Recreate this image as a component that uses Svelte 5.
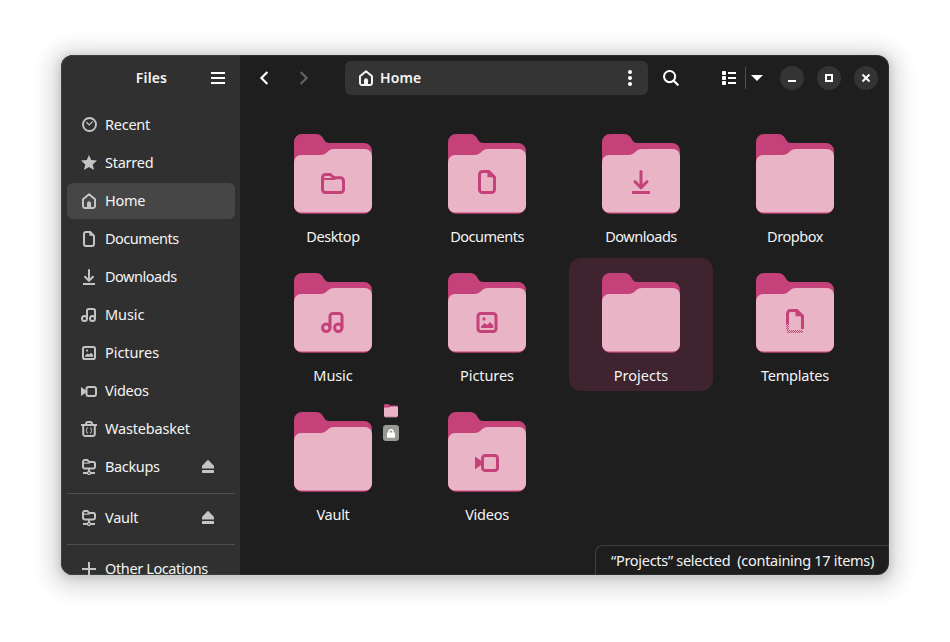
<script>
  const places = [
    { name: 'Recent', icon: 'recent' },
    { name: 'Starred', icon: 'star' },
    { name: 'Home', icon: 'home', active: true },
    { name: 'Documents', icon: 'document' },
    { name: 'Downloads', icon: 'download' },
    { name: 'Music', icon: 'music' },
    { name: 'Pictures', icon: 'picture' },
    { name: 'Videos', icon: 'video' },
    { name: 'Wastebasket', icon: 'trash' },
    { name: 'Backups', icon: 'remote', eject: true },
    { separator: true },
    { name: 'Vault', icon: 'remote', eject: true },
    { separator: true },
    { name: 'Other Locations', icon: 'plus' }
  ];

  const folders = [
    { name: 'Desktop', icon: 'folder' },
    { name: 'Documents', icon: 'document' },
    { name: 'Downloads', icon: 'download' },
    { name: 'Dropbox' },
    { name: 'Music', icon: 'music' },
    { name: 'Pictures', icon: 'picture' },
    { name: 'Projects', selected: true },
    { name: 'Templates', icon: 'template' },
    { name: 'Vault', emblems: true },
    { name: 'Videos', icon: 'video' }
  ];

  // Letter spacing in px for labels that differ from the default
  const tracking = {
    Documents: -0.5, Downloads: -0.48, Desktop: -0.42, Dropbox: -0.45,
    Music: -0.1, Pictures: -0.06, Projects: 0, Templates: -0.2, Wastebasket: -0.18,
    Backups: -0.36, 'Other Locations': -0.38
  };
</script>

{#snippet glyph(name)}
  <svg class="glyph {name}" viewBox="0 0 16 16" fill="none" stroke="currentColor" stroke-width="2">
    {#if name === 'recent'}
      <circle cx="8.5" cy="7.5" r="6.5" stroke-width="1.9" />
      <path d="M5.3 5.3 8.2 8 11.8 4.4" stroke-width="1.2" />
    {:else if name === 'star'}
      <path d="M8 0 10.2 5 16 5.5 11.7 9.4 13 15 8 12.1 3 15 4.3 9.4 0 5.5 5.8 5Z" fill="currentColor" stroke="none" />
    {:else if name === 'home'}
      <path d="M2 6.3 8 1.2 14 6.3V13a1.9 1.9 0 0 1-1.9 2H3.9A1.9 1.9 0 0 1 2 13Z" stroke-linejoin="round" />
      <path d="M6 15V10.2A2 2 0 0 1 8 8.2A2 2 0 0 1 10 10.2V15Z" fill="currentColor" stroke="none" />
    {:else if name === 'document'}
      <path d="M5 1H9.2L13 4.8V13a2 2 0 0 1-2 2H5a2 2 0 0 1-2-2V3a2 2 0 0 1 2-2Z" />
      <path d="M8.3 1V4.8H13.5L10 1Z" fill="currentColor" stroke="none" />
    {:else if name === 'template'}
      <path d="M3 10V3a2 2 0 0 1 2-2H9.2L13 4.8V13.4" />
      <path d="M8.3 1V4.8H13.5L10 1Z" fill="currentColor" stroke="none" />
      <g stroke-width=".67" stroke-dasharray=".67 .67">
        <path d="M2.33 10V14M3.67 10V14M2.67 14.33H13.33M2.67 15.67H13.33" />
        <path d="M3 10.67V14M3.33 15H13.33" />
      </g>
    {:else if name === 'download'}
      <path d="M8 1V11" stroke-linecap="round" />
      <path d="M4 7.8 8 11.8 12 7.8" stroke-linecap="round" stroke-linejoin="round" />
      <path d="M2 15H14" />
    {:else if name === 'music'}
      <circle cx="3.5" cy="12.5" r="2.5" />
      <circle cx="11.5" cy="12.5" r="2.5" />
      <path d="M6 12.5V4.8A1.8 1.8 0 0 1 7.8 3H12.2A1.8 1.8 0 0 1 14 4.8V12.5" />
    {:else if name === 'picture'}
      <rect x="2" y="3" width="12" height="12" rx="1.8" />
      <circle cx="6" cy="6.6" r="1.05" fill="currentColor" stroke="none" />
      <path d="M4 12.7V11.7L6.4 9.4 8.2 10.6 10 8.7 12.2 11V12.7Z" fill="currentColor" stroke="none" />
    {:else if name === 'video'}
      <rect x="5" y="5" width="10" height="10" rx="1.9" />
      <path d="M0 5.7 4.3 8.6V11.2L0 14.2Z" fill="currentColor" stroke="none" />
    {:else if name === 'video-small'}
      <rect x="5.5" y="4" width="9.5" height="9" rx="1.9" />
      <path d="M0 4 4.8 7.3V9.8L0 13Z" fill="currentColor" stroke="none" />
    {:else if name === 'trash'}
      <path d="M0 4H16" />
      <path d="M5 4V3A2 2 0 0 1 7 1H9A2 2 0 0 1 11 3V4" />
      <path d="M2.2 5V13A2 2 0 0 0 4.2 15H11.8A2 2 0 0 0 13.8 13V5" />
      <path d="M7 6.8Q5.6 6.8 5.6 8.2V10.8Q5.6 12.2 7 12.2M9 6.8Q10.4 6.8 10.4 8.2V10.8Q10.4 12.2 9 12.2" stroke-width="1" />
    {:else if name === 'remote'}
      <path d="M2 2.8A1.7 1.7 0 0 1 3.7 1.1H6.2L8.4 3H12.3A1.8 1.8 0 0 1 14 4.8V7.8A1.8 1.8 0 0 1 12.2 9.6H3.8A1.8 1.8 0 0 1 2 7.8Z" />
      <path d="M2 4.1H8.5" stroke-width="1.2" />
      <path d="M8 10V12.4M2 14H6M10 14H14" stroke-width="1.9" />
      <circle cx="8" cy="14" r="1.5" stroke-width="1.3" />
    {:else if name === 'folder'}
      <path d="M1 5A2 2 0 0 1 3 3H6.2L8.8 5.2H13A2 2 0 0 1 15 7.2V13A2 2 0 0 1 13 15H3A2 2 0 0 1 1 13Z" />
      <path d="M2 6H9.5" stroke-width="1.2" />
    {:else if name === 'plus'}
      <path d="M8 1V15M1 8H15" />
    {/if}
  </svg>
{/snippet}

{#snippet label(name)}
  <span style:letter-spacing={name in tracking ? `${tracking[name]}px` : null}>{name}</span>
{/snippet}

{#snippet folderArt()}
  <svg class="art" viewBox="0 0 78 80" preserveAspectRatio="none">
    <path d="M0 8A8 8 0 0 1 8 0H22Q27 0 29.3 4.5L31 7.2Q32.3 9 35 9H70A8 8 0 0 1 78 17V72A8 8 0 0 1 70 79.7H8A8 8 0 0 1 0 72Z" fill="#c4417a" />
    <path d="M0 28A7 7 0 0 1 7 21H26.5Q30 21 32.5 18.8L34.3 17.1Q36.6 15 39.8 15H71A7 7 0 0 1 78 22V71.4A7 7 0 0 1 71 78.5H7A7 7 0 0 1 0 71.4Z" fill="#e8b4c6" />
  </svg>
{/snippet}

<div class="desktop">
  <div class="window">
    <aside>
      <header class="side-head">
        <h1>Files</h1>
        <svg width="14" height="12"><path d="M0 1H14M0 6H14M0 11H14" stroke="#fff" stroke-width="2" /></svg>
      </header>
      <nav>
        {#each places as place}
          {#if place.separator}
            <hr />
          {:else}
            <div class="place" class:active={place.active}>
              {@render glyph(place.icon === 'video' ? 'video-small' : place.icon)}
              {@render label(place.name)}
              {#if place.eject}
                <svg class="eject" width="12" height="13" fill="#c4c4c4">
                  <path d="M5.2.4Q6-.3 6.8.4L12 6V8.6H0V6Z" /><rect y="10" width="12" height="3" rx=".6" />
                </svg>
              {/if}
            </div>
          {/if}
        {/each}
      </nav>
    </aside>
    <main>
      <header class="toolbar">
        <svg class="arrow" width="10" height="16"><path d="M8.4 2 2.4 8 8.4 14" /></svg>
        <svg class="arrow next" width="10" height="16"><path d="M1.6 2 7.6 8 1.6 14" /></svg>
        <div class="pathbar">
          {@render glyph('home')}
          <b>Home</b>
          <svg width="4" height="16" fill="#fff"><circle cx="2" cy="2" r="2" /><circle cx="2" cy="8" r="2" /><circle cx="2" cy="14" r="2" /></svg>
        </div>
        <svg class="search" width="16" height="16" fill="none" stroke="#fff" stroke-width="2"><circle cx="6.6" cy="6.6" r="5.6" /><path d="M10.7 10.7 15.4 15.4" stroke-width="2.2" /></svg>
        <svg class="list" width="14" height="14" fill="#fff">
          {#each [0, 5, 10] as y}
            <rect {y} width="4" height="4" rx=".8" /><rect x="6" y={y + 1} width="8" height="2" />
          {/each}
        </svg>
        <i></i>
        <svg class="drop" width="12" height="6"><path d="M0 0H12L6 6Z" fill="#fff" /></svg>
        <div class="controls">
          <span><svg width="8" height="8"><path d="M0 7H8" /></svg></span>
          <span><svg width="8" height="8"><rect x="1" y="1" width="6" height="6" /></svg></span>
          <span><svg width="8" height="8"><path d="M.5.5 7.5 7.5M7.5.5.5 7.5" /></svg></span>
        </div>
      </header>
      <section class="grid">
        {#each folders as folder}
          <div class="cell" class:selected={folder.selected}>
            <div class="folder">
              {@render folderArt()}
              {#if folder.icon}
                <div class="mark">{@render glyph(folder.icon)}</div>
              {/if}
            </div>
            {@render label(folder.name)}
            {#if folder.emblems}
              <div class="emblems">
                <div class="mini">{@render folderArt()}<i></i></div>
                <div class="lock">
                  <svg width="8" height="9"><path d="M2 4V2.8a2 2 0 0 1 4 0V4" fill="none" stroke="#fff" stroke-width="1.5" /><rect y="3.6" width="8" height="5.2" rx=".6" fill="#fff" /></svg>
                </div>
              </div>
            {/if}
          </div>
        {/each}
      </section>
      <div class="status">“Projects” selected&nbsp; (containing 17 items)</div>
    </main>
  </div>
</div>

<style>
  :global(body) { background: #fff; }
  .desktop {
    box-sizing: border-box;
    width: 950px;
    height: 642px;
    padding: 55px 61px;
    overflow: hidden;
    font: 14.5px/20px "Noto Sans", sans-serif;
    letter-spacing: -.26px;
    color: #f4f4f4;
  }
  svg { display: block; flex: none; }
  .window {
    position: relative;
    display: flex;
    width: 828px;
    height: 520px;
    border-radius: 12px;
    overflow: hidden;
    background: #1e1e1e;
    box-shadow: 0 2px 8px 2px rgba(0, 0, 0, .13), 0 3px 20px 10px rgba(0, 0, 0, .09), 0 6px 20px 16px rgba(0, 0, 0, .04);
  }
  .window::after {
    content: '';
    position: absolute;
    inset: 0;
    border-radius: 12px;
    box-shadow: inset 0 0 0 1px rgba(255, 255, 255, .07);
  }
  aside { width: 179px; flex: none; background: #303030; }
  .side-head { display: flex; align-items: center; height: 46px; padding-left: 30px; }
  h1 { width: 121px; margin: 0 -1px 0 0; text-align: center; font-size: 14px; line-height: 20px; font-weight: 600; letter-spacing: .15px; }
  nav { padding: 6px 5px 0 6px; }
  .place {
    display: flex;
    align-items: center;
    height: 36px;
    padding-left: 14px;
    margin-bottom: 2px;
    border-radius: 6px;
    white-space: nowrap;
  }
  .place > span { padding-bottom: 2px; }
  .place .glyph { margin-right: 8px; color: #c4c4c4; }
  .place .music, .place .picture { margin-top: -2px; }
  .place.active { background: #464646; }
  .eject { margin: 0 21px 1px auto; }
  hr { height: 1px; margin: 8px 0 6px; border: 0; background: #505050; }
  .glyph { width: 16px; height: 16px; }
  main { flex: 1; display: flex; flex-direction: column; min-width: 0; }
  .toolbar { display: flex; align-items: center; height: 46px; padding-left: 19px; }
  .arrow { fill: none; stroke: #fff; stroke-width: 2.2; }
  .next { margin-left: 30px; stroke: #626262; }
  .pathbar {
    box-sizing: border-box;
    display: flex;
    align-items: center;
    width: 303px;
    height: 34px;
    margin-left: 36px;
    padding: 0 16px 0 13px;
    border-radius: 6px;
    background: #343434;
  }
  .pathbar b { flex: 1; margin-left: 6px; font-size: 14px; font-weight: 600; letter-spacing: .1px; }
  .search { margin-left: 15px; }
  .list { margin-left: 43px; }
  .toolbar > i { width: 1px; height: 22px; margin-left: 9px; background: #505050; }
  .drop { margin-left: 5px; }
  .controls { display: flex; gap: 13px; margin-left: 17px; }
  .controls span { display: grid; place-items: center; width: 24px; height: 24px; border-radius: 50%; background: #343434; }
  .controls svg { fill: none; stroke: #fff; stroke-width: 2; }
  .grid { display: grid; grid-template-columns: repeat(4, 144px); grid-auto-rows: 133px; gap: 6px 10px; padding: 18px 0 0 21px; }
  .cell { position: relative; box-sizing: border-box; display: flex; flex-direction: column; align-items: center; padding-top: 15px; border-radius: 12px; }
  .cell.selected { background: #3f232e; }
  .cell > span { margin-top: 12px; }
  .folder { position: relative; width: 78px; height: 80px; }
  .art { width: 100%; height: 100%; }
  .mark { position: absolute; left: 27px; top: 36px; color: #c4417a; }
  .mark .glyph { width: 24px; height: 24px; }
  .emblems { position: absolute; left: 122px; top: 7px; width: 16px; }
  .mini { width: 14px; height: 14px; margin: 0 auto 7px; }
  .mini .art { height: 13px; }
  .mini i { display: block; width: 12px; height: 1px; margin: 0 auto; background: #555; }
  .lock { display: grid; place-items: center; width: 16px; height: 16px; border-radius: 3px; background: #9a9996; }
  .status {
    box-sizing: border-box;
    align-self: flex-end;
    width: 294px;
    height: 30px;
    margin-top: auto;
    padding: 4px 0 0 15px;
    border: solid #404040;
    border-width: 1px 0 0 1px;
    border-top-left-radius: 8px;
    letter-spacing: -.29px;
    white-space: nowrap;
  }
</style>
